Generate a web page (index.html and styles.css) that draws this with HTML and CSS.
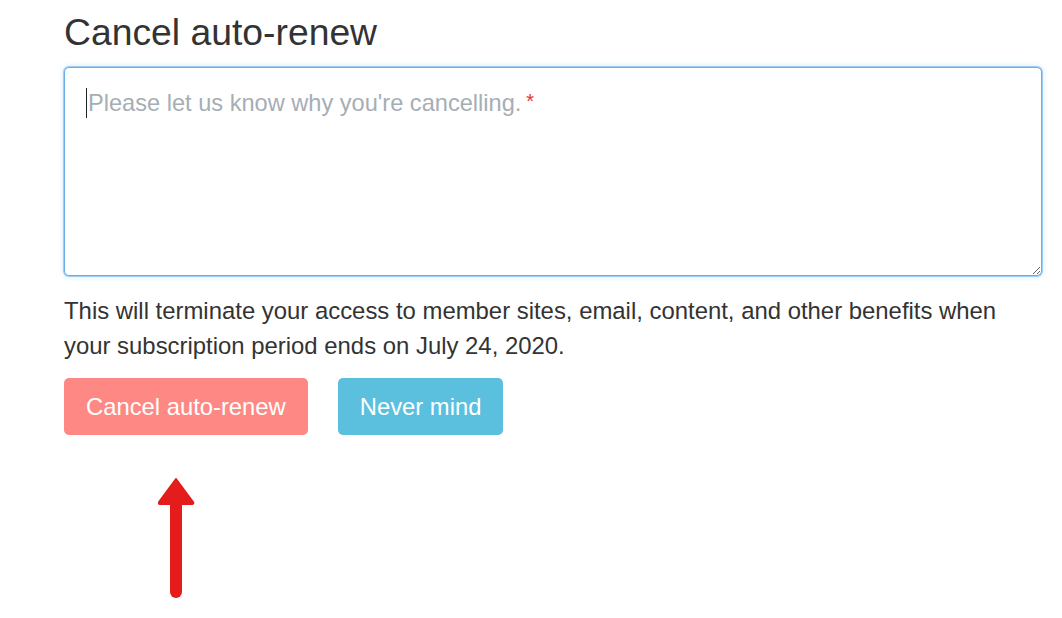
FILE: index.html
```html
<!DOCTYPE html>
<html lang="en">
<head>
<meta charset="utf-8">
<title>Cancel auto-renew</title>
<link rel="stylesheet" href="styles.css">
</head>
<body>
<main class="page">
  <h1 class="title">Cancel auto-renew</h1>
  <div class="field">
    <textarea class="reason" aria-label="Please let us know why you're cancelling."></textarea>
    <span class="hint"><span class="caret"></span>Please let us know why you're cancelling.<span class="req">*</span></span>
  </div>
  <p class="note">This will terminate your access to member sites, email, content, and other benefits when your subscription period ends on July 24, 2020.</p>
  <div class="actions">
    <button class="btn btn-danger" type="button">Cancel auto-renew</button>
    <button class="btn btn-info" type="button">Never mind</button>
  </div>
  <svg class="arrow" width="38" height="124" viewBox="0 0 38 124" aria-hidden="true">
    <path d="M18 2 L35 25 Q36 27 34 27 L2 27 Q0 27 1 25 Z" fill="#e41c1c" stroke="#e41c1c" stroke-width="2" stroke-linejoin="round"/>
    <line x1="18" y1="24" x2="18" y2="115" stroke="#e41c1c" stroke-width="12" stroke-linecap="round"/>
  </svg>
</main>
</body>
</html>
```
FILE: styles.css
```css
html, body {
  margin: 0;
  padding: 0;
  background: #fff;
}
body {
  font-family: "Liberation Sans", Arial, Helvetica, sans-serif;
  color: #333;
}
.page {
  width: 978px;
  padding: 10px 0 0 64px;
  display: flex;
  flex-direction: column;
}
.title {
  margin: 0;
  font-size: 37.3px;
  line-height: 44px;
  font-weight: 400;
  color: #333;
}
.field {
  position: relative;
  margin-top: 13px;
  height: 209px;
}
.reason {
  display: block;
  box-sizing: border-box;
  width: 978px;
  height: 209px;
  margin: 0;
  padding: 16px 21px;
  border: 1px solid #66afe9;
  border-radius: 5px;
  box-shadow: 0 0 0 1px rgba(102, 175, 233, 0.55), 0 0 6px rgba(102, 175, 233, 0.35);
  font-family: inherit;
  font-size: 24px;
  line-height: 35px;
  color: #333;
  outline: none;
  resize: vertical;
}
.hint {
  position: absolute;
  left: 22px;
  top: 17px;
  font-size: 23.6px;
  line-height: 35px;
  color: #a6aeb5;
  pointer-events: none;
  white-space: nowrap;
}
.caret {
  display: inline-block;
  width: 1px;
  height: 30px;
  background: #222;
  vertical-align: -7px;
  margin-right: 1px;
}
.req {
  color: #e8312f;
  font-size: 20px;
  vertical-align: 3px;
  margin-left: 5px;
}
.note {
  margin: 17px 0 0;
  font-size: 23.9px;
  line-height: 35px;
  color: #333;
}
.actions {
  display: flex;
  gap: 30px;
  margin-top: 15px;
}
.btn {
  font-family: inherit;
  font-size: 23.8px;
  line-height: 35px;
  padding: 11px 22px;
  border: 0;
  border-radius: 5px;
  color: #fff;
  cursor: pointer;
}
.btn-danger {
  background: #fe8984;
}
.btn-info {
  background: #5bc0de;
}
.arrow {
  display: block;
  margin: 42px 0 0 94px;
}
```
